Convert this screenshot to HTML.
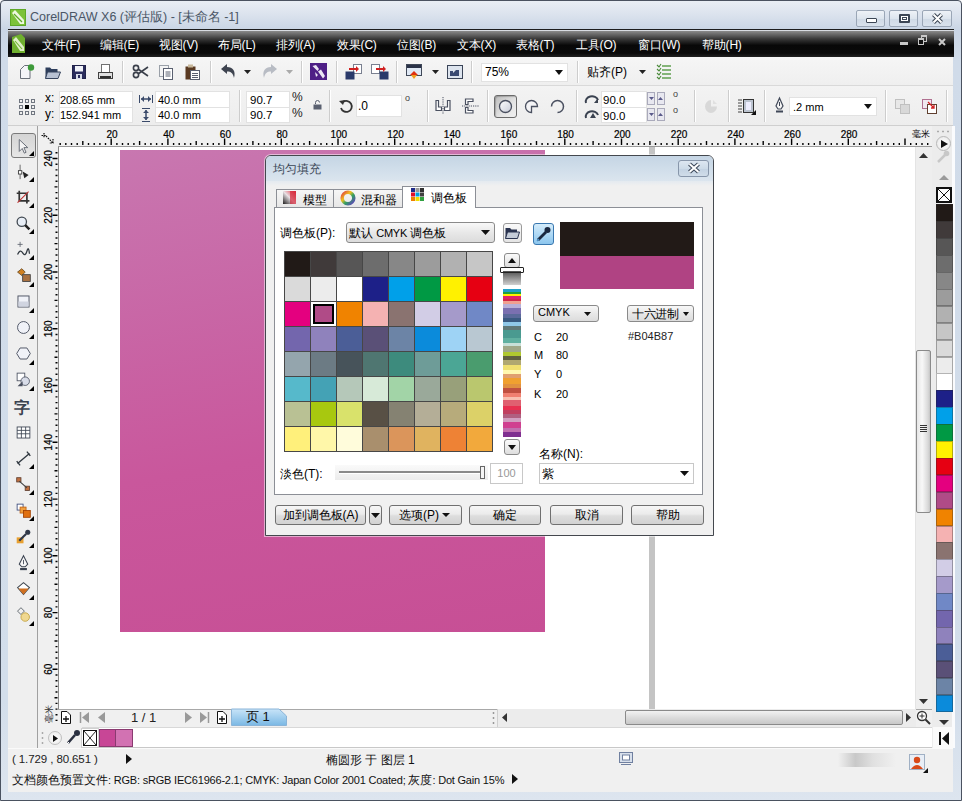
<!DOCTYPE html>
<html><head><meta charset="utf-8">
<style>
*{margin:0;padding:0;box-sizing:border-box}
html,body{width:962px;height:801px;overflow:hidden;background:#fff}
body{font-family:"Liberation Sans",sans-serif;font-size:12px;color:#000;position:relative}
.a{position:absolute}
svg{position:absolute;overflow:visible}
#frame{left:0;top:0;width:962px;height:801px;background:linear-gradient(#e9eef4,#dde4ee 12px,#c9d5e5 29px,#d0dbe9 60px,#d3deeb 700px,#dde5ef);border:1px solid #4a5260;border-radius:4px 4px 0 0}
#title{left:30px;top:9px;font-size:12.5px;color:#4a5666;white-space:nowrap}
.wb{top:10px;height:17px;border:1px solid #9aa6b6;border-radius:2px;background:linear-gradient(#eef2f7,#dde5ee 50%,#cfd9e5 51%,#d9e2ec)}
#menubar{left:8px;top:31px;width:946px;height:26px;background:linear-gradient(#8a8a8a,#3a3a3a 30%,#080808 55%,#0a0a0a 85%,#202020)}
.menu{top:37px;font-size:12px;letter-spacing:-0.2px;color:#fff;white-space:nowrap}
#tb1{left:8px;top:57px;width:945px;height:29px;background:linear-gradient(#f6f6f6,#efefef);border-bottom:1px solid #d9d9d9}
#tb2{left:8px;top:86px;width:945px;height:40px;background:linear-gradient(#f3f3f3,#ededed);border-bottom:1px solid #cfcfcf}
.sep{width:1px;background:#cdcdcd;border-right:1px solid #fff;width:2px}
.inp{background:#fff;border:1px solid #e2e2e2;font-size:12.5px;white-space:nowrap;padding-left:3px;line-height:15px}
.lbl{font-size:12.5px;white-space:nowrap}
#toolbox{left:8px;top:126px;width:30px;height:622px;background:#efefef;border-right:1px solid #d8d8d8}
#hruler{left:38px;top:126px;width:894px;height:21px;background:#f0f0f0}
#vruler{left:38px;top:147px;width:20px;height:580px;background:#f0f0f0}
#canvas{left:58px;top:147px;width:858px;height:562px;background:#fff}
#rect{left:120px;top:150px;width:425px;height:482px;background:linear-gradient(170deg,#c877b0,#c9579c 60%,#c74f95)}
#vscroll{left:916px;top:147px;width:16px;height:562px;background:#eeeeee}
#palette{left:932px;top:126px;width:21px;height:622px;background:#ececec}
#navbar{left:58px;top:709px;width:874px;height:18px;background:#f0f0f0;border-top:1px solid #a8a8a8}
#docpal{left:38px;top:727px;width:894px;height:21px;background:#fff;border-top:1px solid #d8d8d8;border-bottom:1px solid #c8c8c8}
#status{left:8px;top:748px;width:945px;height:44px;background:#f0f0f0}
</style></head><body>
<div id="frame" class="a"></div>
<!-- title bar -->
<svg style="left:10px;top:9px" width="16" height="17" viewBox="0 0 16 17"><rect x="0" y="0" width="16" height="17" fill="#5ea828"/><rect x="1" y="1" width="14" height="15" fill="#7cc23a"/><path d="M2 4 L5 1 L14 11 L14 15 L10 15 Z" fill="#eef8e0"/><path d="M4 5 L12 13" stroke="#5ea828" stroke-width="1.2"/></svg>
<div id="title" class="a">CorelDRAW X6 (评估版) - [未命名 -1]</div>
<div class="a wb" style="left:856px;width:29px"><div class="a" style="left:9px;top:7px;width:11px;height:5px;border:1.5px solid #3c4654;border-radius:1px;background:#fff"></div></div>
<div class="a wb" style="left:889px;width:29px"><div class="a" style="left:9px;top:3px;width:11px;height:9px;border:2px solid #3c4654;border-radius:1px;background:#fff"></div><div class="a" style="left:12px;top:6px;width:5px;height:3px;border:1px solid #3c4654"></div></div>
<div class="a wb" style="left:922px;width:30px"><svg style="left:8px;top:2px" width="13" height="11" viewBox="0 0 13 11"><path d="M2.5 1.5 L10.5 9.5 M10.5 1.5 L2.5 9.5" stroke="#3c4654" stroke-width="4"/><path d="M2.5 1.5 L10.5 9.5 M10.5 1.5 L2.5 9.5" stroke="#fff" stroke-width="2"/></svg></div>
<!-- menu bar -->
<div class="a" style="left:8px;top:29px;width:946px;height:2px;background:linear-gradient(#1e1e1e 50%,#d8dce2 50%)"></div>
<div id="menubar" class="a"></div>
<svg style="left:12px;top:34px" width="13" height="19" viewBox="0 0 13 19"><path d="M0 3 L9 0 L13 4 L13 19 L0 19Z" fill="#6fb02e"/><path d="M1 6 L4 3 L12 13 L12 17 L8 17Z" fill="#dff0c8"/><path d="M3 7 L10 15" stroke="#6fb02e" stroke-width="1.1"/></svg>
<div class="a menu" style="left:42px">文件(F)</div>
<div class="a menu" style="left:100px">编辑(E)</div>
<div class="a menu" style="left:159px">视图(V)</div>
<div class="a menu" style="left:218px">布局(L)</div>
<div class="a menu" style="left:276px">排列(A)</div>
<div class="a menu" style="left:337px">效果(C)</div>
<div class="a menu" style="left:397px">位图(B)</div>
<div class="a menu" style="left:457px">文本(X)</div>
<div class="a menu" style="left:516px">表格(T)</div>
<div class="a menu" style="left:576px">工具(O)</div>
<div class="a menu" style="left:638px">窗口(W)</div>
<div class="a menu" style="left:702px">帮助(H)</div>
<div class="a" style="left:900px;top:42px;width:8px;height:3px;background:#c8c8c8"></div>
<div class="a" style="left:921px;top:35px;width:6px;height:7px;border:1px solid #c8c8c8;border-top-width:2px"></div><div class="a" style="left:918px;top:38px;width:6px;height:7px;border:1px solid #c8c8c8;border-top-width:2px;background:#111"></div>
<svg style="left:938px;top:38px" width="8" height="8" viewBox="0 0 8 8"><path d="M1 1L7 7M7 1L1 7" stroke="#c8c8c8" stroke-width="2"/></svg>
<!-- toolbar 1 -->
<div id="tb1" class="a"></div>
<svg style="left:19px;top:64px" width="16" height="16" viewBox="0 0 16 16"><path d="M1.5 5.5 L5.5 1.5 L11 1.5 L11 14.5 L1.5 14.5Z" fill="#f4f4f8" stroke="#6a6f7a"/><circle cx="12" cy="3.5" r="3.2" fill="#3e9a3a"/></svg>
<svg style="left:45px;top:65px" width="16" height="15" viewBox="0 0 16 15"><path d="M0.5 2.5 L5 2.5 L6.5 4 L12.5 4 L12.5 13.5 L0.5 13.5Z" fill="#2e3e5c"/><path d="M2.5 7 L15.5 7 L13 13.5 L0.5 13.5Z" fill="#b8c2d4" stroke="#36445e"/></svg>
<svg style="left:72px;top:65px" width="14" height="14" viewBox="0 0 14 14"><rect x=".5" y=".5" width="13" height="13" fill="#2a2c5c" stroke="#20224a"/><rect x="3" y="1" width="8" height="5.5" fill="#f0f2f8"/><rect x="4" y="9" width="6" height="5" fill="#d8dce8"/><rect x="6" y="10" width="2" height="3" fill="#2a2c5c"/></svg>
<svg style="left:98px;top:64px" width="15" height="16" viewBox="0 0 15 16"><rect x="3.5" y=".5" width="8" height="8" fill="#fff" stroke="#707070"/><rect x=".5" y="8.5" width="14" height="6" fill="#e0e0e0" stroke="#404040"/><rect x="2" y="12" width="11" height="2" fill="#303030"/></svg>
<div class="a sep" style="left:122px;top:61px;height:22px"></div>
<svg style="left:132px;top:64px" width="17" height="15" viewBox="0 0 17 15"><circle cx="4" cy="4" r="2.6" fill="none" stroke="#3a3f4a" stroke-width="1.6"/><circle cx="4" cy="11" r="2.6" fill="none" stroke="#3a3f4a" stroke-width="1.6"/><path d="M6 5 L16 12 M6 10 L16 3" stroke="#3a3f4a" stroke-width="1.6"/></svg>
<svg style="left:159px;top:65px" width="15" height="15" viewBox="0 0 15 15"><rect x=".5" y=".5" width="9" height="11" fill="#f4f4f4" stroke="#9aa0a8"/><rect x="4.5" y="3.5" width="9" height="11" fill="#fff" stroke="#5a6070"/><path d="M6.5 7h5M6.5 9h5M6.5 11h5" stroke="#5a6070"/></svg>
<svg style="left:185px;top:64px" width="15" height="16" viewBox="0 0 15 16"><rect x=".5" y="2.5" width="10" height="13" fill="#5a3a22"/><rect x="3" y=".5" width="5" height="3" fill="#c8b89a"/><rect x="5.5" y="6.5" width="9" height="9" fill="#fff" stroke="#5a6070"/><path d="M7 9.5h6M7 11.5h6M7 13.5h6" stroke="#5a6070"/></svg>
<div class="a sep" style="left:210px;top:61px;height:22px"></div>
<svg style="left:220px;top:63px" width="17" height="17" viewBox="0 0 17 17"><path d="M1 6 L7 1 L7 4 C13 4 16 8 14 15 C13 10 11 8.5 7 8.5 L7 11Z" fill="#3e4450"/></svg>
<svg style="left:244px;top:70px" width="7" height="4"><path d="M0 0h7L3.5 4Z" fill="#222"/></svg>
<svg style="left:261px;top:63px" width="17" height="17" viewBox="0 0 17 17"><path d="M16 6 L10 1 L10 4 C4 4 1 8 3 15 C4 10 6 8.5 10 8.5 L10 11Z" fill="#b8bcc4"/></svg>
<svg style="left:286px;top:70px" width="7" height="4"><path d="M0 0h7L3.5 4Z" fill="#aaa"/></svg>
<div class="a sep" style="left:301px;top:61px;height:22px"></div>
<svg style="left:310px;top:63px" width="17" height="17" viewBox="0 0 17 17"><rect width="17" height="17" fill="#4e1f86"/><path d="M2.5 3 L6 2 L9 6 L7.5 8 Z M8 8.5 L11 6.5 L15 13 L13 15.5 Z M5 9 L8 12 L6 14Z" fill="#ece6f4"/></svg>
<div class="a sep" style="left:336px;top:61px;height:22px"></div>
<svg style="left:345px;top:64px" width="18" height="16" viewBox="0 0 18 16"><rect x="8.5" y=".5" width="8" height="9" fill="#fff" stroke="#7a8090"/><rect x=".5" y="7.5" width="9" height="8" fill="#2a3a6a"/><path d="M4 5 L12 5" stroke="#d02020" stroke-width="2"/><path d="M11 2 L14 5 L11 8Z" fill="#d02020"/></svg>
<svg style="left:371px;top:64px" width="18" height="16" viewBox="0 0 18 16"><rect x=".5" y=".5" width="8" height="9" fill="#fff" stroke="#7a8090"/><rect x="8.5" y="7.5" width="9" height="8" fill="#2a3a6a"/><path d="M5 5 L13 5" stroke="#d02020" stroke-width="2"/><path d="M12 2 L15 5 L12 8Z" fill="#d02020"/></svg>
<div class="a sep" style="left:396px;top:61px;height:22px"></div>
<svg style="left:406px;top:64px" width="16" height="16" viewBox="0 0 16 16"><rect x=".5" y=".5" width="15" height="11" fill="#dfe8f4" stroke="#404858"/><rect x="1" y="1" width="14" height="3" fill="#2a3248"/><path d="M4 11 L12 11 L8 7Z" fill="#e03010"/><path d="M5 11 L11 11 L8 15Z" fill="#f0a020"/></svg>
<svg style="left:432px;top:70px" width="7" height="4"><path d="M0 0h7L3.5 4Z" fill="#222"/></svg>
<svg style="left:447px;top:65px" width="16" height="14" viewBox="0 0 16 14"><rect x=".5" y=".5" width="15" height="13" fill="#dde4ee" stroke="#3a4458"/><path d="M3 11 L3 6 L6 6 L6 8 L9 5 L12 5 L12 11Z" fill="#3a4a72"/></svg>
<div class="a sep" style="left:471px;top:61px;height:22px"></div>
<div class="a inp" style="left:481px;top:63px;width:87px;height:19px;line-height:17px;font-size:12px;padding-left:3px">75%</div>
<svg style="left:555px;top:70px" width="8" height="5"><path d="M0 0h8L4 5Z" fill="#111"/></svg>
<div class="a sep" style="left:577px;top:61px;height:22px"></div>
<div class="a lbl" style="left:587px;top:64px;font-size:12px">贴齐(P)</div>
<svg style="left:639px;top:70px" width="7" height="4"><path d="M0 0h7L3.5 4Z" fill="#222"/></svg>
<svg style="left:657px;top:64px" width="14" height="16" viewBox="0 0 14 16"><path d="M5 2h9M5 6h9M5 10h9M5 14h9" stroke="#60a050" stroke-width="1.3"/><path d="M0 1l2 2 2-3M0 5l2 2 2-3M0 9l2 2 2-3M0 13l2 2 2-3" stroke="#4a8a3a" fill="none" stroke-width="1.1"/></svg>
<!-- property bar -->
<div id="tb2" class="a"></div>
<svg style="left:19px;top:99px" width="16" height="16" viewBox="0 0 16 16"><g fill="none" stroke="#707680"><rect x=".5" y=".5" width="3" height="3"/><rect x="6.5" y=".5" width="3" height="3"/><rect x="12.5" y=".5" width="3" height="3"/><rect x=".5" y="6.5" width="3" height="3"/><rect x="12.5" y="6.5" width="3" height="3"/><rect x=".5" y="12.5" width="3" height="3"/><rect x="6.5" y="12.5" width="3" height="3"/><rect x="12.5" y="12.5" width="3" height="3"/></g><rect x="6" y="6" width="4" height="4" fill="#000"/></svg>
<div class="a lbl" style="left:45px;top:91px;font-size:12px">x:</div>
<div class="a lbl" style="left:45px;top:107px;font-size:12px">y:</div>
<div class="a inp" style="left:59px;top:91px;width:74px;height:16px;border-bottom:none;font-size:11px;padding-left:0;line-height:16px">208.65 mm</div>
<div class="a inp" style="left:59px;top:107px;width:74px;height:16px;font-size:11px;padding-left:0;line-height:15px">152.941 mm</div>
<svg style="left:139px;top:95px" width="14" height="8" viewBox="0 0 14 8"><path d="M0.5 0v8M13.5 0v8" stroke="#3a4a6a"/><path d="M2 4h10" stroke="#3a4a6a" stroke-width="1.5"/><path d="M2 4l3-3v6zM12 4l-3-3v6z" fill="#3a4a6a"/></svg>
<svg style="left:141px;top:108px" width="10" height="14" viewBox="0 0 10 14"><path d="M1 .5h8M1 13.5h8" stroke="#3a4a6a"/><path d="M5 2v10" stroke="#3a4a6a" stroke-width="1.5"/><path d="M5 2l-3 3h6zM5 12l-3-3h6z" fill="#3a4a6a"/></svg>
<div class="a inp" style="left:155px;top:91px;width:75px;height:16px;border-bottom:none;font-size:11px;padding-left:2px;line-height:16px">40.0 mm</div>
<div class="a inp" style="left:155px;top:107px;width:75px;height:16px;font-size:11px;padding-left:2px;line-height:15px">40.0 mm</div>
<div class="a sep" style="left:239px;top:90px;height:32px"></div>
<div class="a inp" style="left:246px;top:91px;width:44px;height:16px;border-bottom:none;font-size:11.5px;line-height:16px">90.7</div>
<div class="a inp" style="left:246px;top:107px;width:44px;height:16px;font-size:11.5px">90.7</div>
<div class="a lbl" style="left:292px;top:90px;font-size:12px;color:#222">%</div>
<div class="a lbl" style="left:292px;top:106px;font-size:12px;color:#222">%</div>
<svg style="left:313px;top:100px" width="9" height="10" viewBox="0 0 9 10"><path d="M2.5 4V2.5a2 2 0 0 1 4 0" fill="none" stroke="#5a6070"/><rect x=".5" y="4.5" width="8" height="5" fill="#5a6070"/></svg>
<div class="a sep" style="left:329px;top:90px;height:32px"></div>
<svg style="left:339px;top:99px" width="14" height="14" viewBox="0 0 14 14"><path d="M4 3 A5.5 5.5 0 1 1 2 9" fill="none" stroke="#333" stroke-width="1.8"/><path d="M0 2 L6 1 L4 6Z" fill="#333"/></svg>
<div class="a inp" style="left:356px;top:95px;width:46px;height:22px;line-height:20px;font-size:12px;padding-left:1px">.0</div>
<div class="a lbl" style="left:405px;top:93px;font-size:9px;color:#444">o</div>
<div class="a sep" style="left:427px;top:90px;height:32px"></div>
<svg style="left:435px;top:97px" width="16" height="17" viewBox="0 0 16 17"><path d="M1 3.5H3.5V10H6.5V13.5H1Z M15 3.5H12.5V10H9.5V13.5H15Z" fill="#fff" stroke="#4a5060" stroke-width="1.2"/><path d="M8 0V17" stroke="#4a5060" stroke-dasharray="1.2 1"/></svg>
<svg style="left:462px;top:98px" width="17" height="16" viewBox="0 0 17 16"><path d="M3.5 1H11V3.5H6V6.5H3.5Z M3.5 15H11V12.5H6V9.5H3.5Z" fill="#fff" stroke="#4a5060" stroke-width="1.2"/><path d="M0 8H17" stroke="#4a5060" stroke-dasharray="1.2 1"/></svg>
<div class="a sep" style="left:487px;top:90px;height:32px"></div>
<div class="a" style="left:494px;top:95px;width:23px;height:23px;border:1px solid #6a6a6a;border-radius:3px;background:linear-gradient(135deg,#bcbcbc,#e4e4e4 60%,#f0f0f0);box-shadow:inset 1px 1px 1px rgba(0,0,0,.2)"></div>
<svg style="left:498px;top:99px" width="15" height="15" viewBox="0 0 15 15"><defs><linearGradient id="eg" x1="0" y1="0" x2="1" y2="1"><stop offset="0" stop-color="#fff"/><stop offset="1" stop-color="#c8ccd8"/></linearGradient></defs><circle cx="7.5" cy="7.5" r="6" fill="url(#eg)" stroke="#4a5060" stroke-width="1.3"/></svg>
<svg style="left:524px;top:99px" width="15" height="15" viewBox="0 0 15 15"><path d="M7.5 7.5 V13.5 A6 6 0 1 1 13.5 7.5Z" fill="#f4f4f6" stroke="#4a5060" stroke-width="1.3"/></svg>
<svg style="left:550px;top:99px" width="15" height="15" viewBox="0 0 15 15"><path d="M7.5 13.5 A6 6 0 1 1 13.5 7.5" fill="none" stroke="#4a5060" stroke-width="1.5" transform="rotate(90 7.5 7.5)"/></svg>
<div class="a sep" style="left:576px;top:90px;height:32px"></div>
<svg style="left:585px;top:94px" width="14" height="10" viewBox="0 0 14 10"><path d="M1 9 A6 5 0 0 1 13 6" fill="none" stroke="#3a4250" stroke-width="2"/><path d="M9 9 L13 4 L13 9Z" fill="#3a4250"/></svg>
<svg style="left:585px;top:109px" width="14" height="10" viewBox="0 0 14 10"><path d="M1 9 A6 5 0 0 1 13 6" fill="none" stroke="#3a4250" stroke-width="2"/><path d="M5 9 L8 4 L11 9Z" fill="#3a4250"/></svg>
<div class="a inp" style="left:601px;top:91px;width:46px;height:16px;border-bottom:none;font-size:11.5px;padding-left:1px;line-height:17px">90.0</div>
<div class="a inp" style="left:601px;top:107px;width:46px;height:16px;font-size:11.5px;padding-left:1px;line-height:16px">90.0</div>
<div class="a" style="left:647px;top:92px;width:8px;height:13px;border:1px solid #aab;background:#e8e8f0"></div>
<div class="a" style="left:657px;top:92px;width:8px;height:13px;border:1px solid #aab;background:#e8e8f0"></div>
<div class="a" style="left:647px;top:108px;width:8px;height:13px;border:1px solid #aab;background:#e8e8f0"></div>
<div class="a" style="left:657px;top:108px;width:8px;height:13px;border:1px solid #aab;background:#e8e8f0"></div>
<svg style="left:648px;top:97px" width="17" height="20"><path d="M1 0h5L3.5 3zM10 3h5L12.5 0zM1 16h5L3.5 19zM10 19h5L12.5 16z" fill="#5a5a8a"/></svg>
<div class="a lbl" style="left:673px;top:89px;font-size:9px;color:#444">o</div>
<div class="a lbl" style="left:673px;top:105px;font-size:9px;color:#444">o</div>
<div class="a sep" style="left:694px;top:90px;height:32px"></div>
<svg style="left:704px;top:99px" width="14" height="15" viewBox="0 0 14 15"><path d="M7 7.5 L13 7.5 A6 6.5 0 1 1 7 1Z" fill="#d8d8d8"/><path d="M9 1 L13 5 L9 5Z" fill="#e0e0e0"/></svg>
<div class="a sep" style="left:728px;top:90px;height:32px"></div>
<svg style="left:738px;top:98px" width="18" height="18" viewBox="0 0 18 18"><path d="M0 2h4M0 5h4M0 8h4M0 11h4M0 14h4" stroke="#444"/><rect x="5.5" y="1.5" width="10" height="13" fill="#bcc4d0" stroke="#333"/><rect x="8" y="4" width="5" height="8" fill="#eef"/><path d="M13 17L18 12L18 17Z" fill="#111"/></svg>
<div class="a sep" style="left:764px;top:90px;height:32px"></div>
<svg style="left:775px;top:97px" width="9" height="16" viewBox="0 0 9 16"><path d="M4.5 1 L8 9 L6 12 L3 12 L1 9Z" fill="#f4f4f4" stroke="#404858" stroke-width="1.2"/><path d="M4.5 5v4" stroke="#404858"/><rect x="1" y="13.5" width="7" height="2" fill="#404858"/></svg>
<div class="a inp" style="left:789px;top:97px;width:88px;height:19px;line-height:19px;font-size:11px">.2 mm</div>
<svg style="left:864px;top:104px" width="8" height="5"><path d="M0 0h8L4 5Z" fill="#111"/></svg>
<div class="a sep" style="left:885px;top:90px;height:32px"></div>
<svg style="left:895px;top:99px" width="16" height="15" viewBox="0 0 16 15"><rect x=".5" y=".5" width="9" height="9" fill="#e8e8e8" stroke="#c0c0c0"/><rect x="5.5" y="5.5" width="9" height="9" fill="#d8d8d8" stroke="#c0c0c0"/></svg>
<svg style="left:922px;top:99px" width="16" height="16" viewBox="0 0 16 16"><rect x=".5" y=".5" width="9" height="9" fill="#f0e8f0" stroke="#b07090"/><rect x="5.5" y="5.5" width="9" height="9" fill="#fff" stroke="#604030"/><path d="M6 3 L12 9 M9 9h3V6" stroke="#d02020" stroke-width="1.3" fill="none"/></svg>
<div class="a sep" style="left:946px;top:90px;height:32px"></div>
<!-- workspace -->
<div id="toolbox" class="a"></div>
<div class="a" style="left:11px;top:133px;width:25px;height:25px;border:1px solid #7a7a7a;border-radius:3px;background:linear-gradient(#d4d4d4,#e6e6e6)"></div>
<svg style="left:14.5px;top:136.5px" width="17" height="17" viewBox="0 0 20 20"><path d="M5 3 L5 17 L8.5 13.5 L11 19 L13 18 L10.5 12.5 L15 12.5Z" fill="#f4f4f4" stroke="#606670" stroke-width="1.1"/></svg>
<svg style="left:28.5px;top:151.0px" width="5" height="5"><path d="M5 0V5H0Z" fill="#000"/></svg>
<svg style="left:14.5px;top:162.6px" width="17" height="17" viewBox="0 0 20 20"><path d="M6 2 L6 9" stroke="#555" /><rect x="4" y="9" width="4" height="4" fill="#fff" stroke="#333"/><path d="M9 10 L16 14 L11 18Z" fill="#222"/><path d="M6 13 L6 19" stroke="#555"/></svg>
<svg style="left:28.5px;top:177.1px" width="5" height="5"><path d="M5 0V5H0Z" fill="#000"/></svg>
<svg style="left:14.5px;top:188.7px" width="17" height="17" viewBox="0 0 20 20"><path d="M5 2V14H17M2 5H14V17" fill="none" stroke="#333" stroke-width="2"/><path d="M3 16 L16 3" stroke="#c03030" stroke-width="1.2"/></svg>
<svg style="left:28.5px;top:203.2px" width="5" height="5"><path d="M5 0V5H0Z" fill="#000"/></svg>
<svg style="left:14.5px;top:214.8px" width="17" height="17" viewBox="0 0 20 20"><circle cx="8" cy="8" r="5.5" fill="#e8eef6" stroke="#404850" stroke-width="1.5"/><path d="M12 12 L17 17" stroke="#202020" stroke-width="3"/></svg>
<svg style="left:28.5px;top:229.3px" width="5" height="5"><path d="M5 0V5H0Z" fill="#000"/></svg>
<svg style="left:14.5px;top:240.9px" width="17" height="17" viewBox="0 0 20 20"><path d="M3 4 H9 M6 1 V7" stroke="#606670"/><path d="M3 16 Q6 9 9 14 T14 12 T17 15" fill="none" stroke="#303840" stroke-width="1.5"/></svg>
<svg style="left:28.5px;top:255.4px" width="5" height="5"><path d="M5 0V5H0Z" fill="#000"/></svg>
<svg style="left:14.5px;top:267.0px" width="17" height="17" viewBox="0 0 20 20"><path d="M3 6 L8 2 L12 6 L8 10Z" fill="#d08020" stroke="#6a4a20"/><rect x="9" y="9" width="9" height="8" fill="#a87040" stroke="#404040"/></svg>
<svg style="left:28.5px;top:281.5px" width="5" height="5"><path d="M5 0V5H0Z" fill="#000"/></svg>
<svg style="left:14.5px;top:293.1px" width="17" height="17" viewBox="0 0 20 20"><rect x="3.5" y="3.5" width="13" height="13" fill="#f0f2f8" stroke="#4a5060" stroke-width="1.1"/><rect x="4" y="10" width="12" height="6" fill="#d0d4e0"/></svg>
<svg style="left:28.5px;top:307.6px" width="5" height="5"><path d="M5 0V5H0Z" fill="#000"/></svg>
<svg style="left:14.5px;top:319.2px" width="17" height="17" viewBox="0 0 20 20"><circle cx="10" cy="10" r="7" fill="#f0f2f8" stroke="#4a5060" stroke-width="1.1"/></svg>
<svg style="left:28.5px;top:333.7px" width="5" height="5"><path d="M5 0V5H0Z" fill="#000"/></svg>
<svg style="left:14.5px;top:345.3px" width="17" height="17" viewBox="0 0 20 20"><path d="M6 3.5 H14 L18 10 L14 16.5 H6 L2 10Z" fill="#f0f2f8" stroke="#4a5060" stroke-width="1.1"/></svg>
<svg style="left:28.5px;top:359.8px" width="5" height="5"><path d="M5 0V5H0Z" fill="#000"/></svg>
<svg style="left:14.5px;top:371.4px" width="17" height="17" viewBox="0 0 20 20"><rect x="2.5" y="2.5" width="9" height="9" fill="#fff" stroke="#4a5060"/><circle cx="12" cy="12" r="5" fill="#d8dce8" stroke="#4a5060"/><path d="M3 18 L9 12 L9 18Z" fill="#4a5060"/></svg>
<svg style="left:28.5px;top:385.9px" width="5" height="5"><path d="M5 0V5H0Z" fill="#000"/></svg>
<svg style="left:13px;top:396.0px" width="20" height="20" viewBox="0 0 20 20"><text x="1" y="17" font-size="16" font-weight="bold" fill="#3a4250" font-family="Liberation Sans">字</text></svg>
<svg style="left:14.5px;top:423.6px" width="17" height="17" viewBox="0 0 20 20"><rect x="2.5" y="3.5" width="15" height="13" fill="#fff" stroke="#3a4250"/><path d="M2.5 7.5h15M2.5 11.5h15M7.5 3.5v13M12.5 3.5v13" stroke="#3a4250"/></svg>
<svg style="left:14.5px;top:449.7px" width="17" height="17" viewBox="0 0 20 20"><path d="M3 16 L17 4" stroke="#303840" stroke-width="1.6"/><path d="M2 13 L6 18 M14 2 L18 7" stroke="#303840" stroke-width="1.6"/></svg>
<svg style="left:28.5px;top:464.2px" width="5" height="5"><path d="M5 0V5H0Z" fill="#000"/></svg>
<svg style="left:14.5px;top:475.8px" width="17" height="17" viewBox="0 0 20 20"><rect x="2" y="2" width="5" height="5" fill="#c07040" stroke="#604030"/><rect x="12" y="12" width="5" height="5" fill="#c07040" stroke="#604030"/><path d="M5 6 L14 14" stroke="#404040" stroke-width="1.3"/></svg>
<svg style="left:28.5px;top:490.3px" width="5" height="5"><path d="M5 0V5H0Z" fill="#000"/></svg>
<svg style="left:14.5px;top:501.9px" width="17" height="17" viewBox="0 0 20 20"><rect x="2.5" y="2.5" width="7" height="7" fill="#fff" stroke="#3a4a7a"/><rect x="6" y="6" width="7" height="7" fill="#f0a040" stroke="#c06010"/><rect x="10" y="10" width="8" height="8" fill="#e07010" stroke="#a04000"/></svg>
<svg style="left:28.5px;top:516.4px" width="5" height="5"><path d="M5 0V5H0Z" fill="#000"/></svg>
<svg style="left:14.5px;top:528.0px" width="17" height="17" viewBox="0 0 20 20"><rect x="2" y="11" width="8" height="7" fill="#e8a030"/><path d="M5 15 L13 7" stroke="#303848" stroke-width="2.5"/><circle cx="15" cy="5" r="3" fill="#303848"/></svg>
<svg style="left:28.5px;top:542.5px" width="5" height="5"><path d="M5 0V5H0Z" fill="#000"/></svg>
<svg style="left:14.5px;top:554.1px" width="17" height="17" viewBox="0 0 20 20"><path d="M10 2 L15 12 L12 15 L8 15 L5 12Z" fill="#f8f8f8" stroke="#3a4250" stroke-width="1.2"/><path d="M10 7v5" stroke="#3a4250"/><rect x="6" y="16.5" width="8" height="2.5" fill="#3a4250"/></svg>
<svg style="left:28.5px;top:568.6px" width="5" height="5"><path d="M5 0V5H0Z" fill="#000"/></svg>
<svg style="left:14.5px;top:580.2px" width="17" height="17" viewBox="0 0 20 20"><path d="M3 9 L10 3 L17 9 L10 17Z" fill="#fff" stroke="#404850" stroke-width="1.2"/><path d="M4 10 L16 10 L10 17Z" fill="#d07020"/></svg>
<svg style="left:28.5px;top:594.7px" width="5" height="5"><path d="M5 0V5H0Z" fill="#000"/></svg>
<svg style="left:14.5px;top:606.3px" width="17" height="17" viewBox="0 0 20 20"><path d="M3 6 L7 2 L11 6 L7 10Z" fill="#f0f0f0" stroke="#505860"/><circle cx="12" cy="13" r="5" fill="#f0d890" stroke="#c0a040"/></svg>
<svg style="left:28.5px;top:620.8px" width="5" height="5"><path d="M5 0V5H0Z" fill="#000"/></svg>
<div id="hruler" class="a"></div>
<svg style="left:0;top:0" width="962" height="801">
<path d="M58 146.5H932" stroke="#9a9a9a"/>
<path d="M60.2 143V145 M65.8 143V145 M71.5 143V145 M77.2 143V145 M82.8 141V145 M88.5 143V145 M94.2 143V145 M99.9 143V145 M105.5 143V145 M111.2 138.5V145 M116.9 143V145 M122.5 143V145 M128.2 143V145 M133.9 143V145 M139.6 141V145 M145.2 143V145 M150.9 143V145 M156.6 143V145 M162.2 143V145 M167.9 138.5V145 M173.6 143V145 M179.2 143V145 M184.9 143V145 M190.6 143V145 M196.2 141V145 M201.9 143V145 M207.6 143V145 M213.3 143V145 M218.9 143V145 M224.6 138.5V145 M230.3 143V145 M235.9 143V145 M241.6 143V145 M247.3 143V145 M252.9 141V145 M258.6 143V145 M264.3 143V145 M270.0 143V145 M275.6 143V145 M281.3 138.5V145 M287.0 143V145 M292.6 143V145 M298.3 143V145 M304.0 143V145 M309.6 141V145 M315.3 143V145 M321.0 143V145 M326.7 143V145 M332.3 143V145 M338.0 138.5V145 M343.7 143V145 M349.3 143V145 M355.0 143V145 M360.7 143V145 M366.4 141V145 M372.0 143V145 M377.7 143V145 M383.4 143V145 M389.0 143V145 M394.7 138.5V145 M400.4 143V145 M406.0 143V145 M411.7 143V145 M417.4 143V145 M423.1 141V145 M428.7 143V145 M434.4 143V145 M440.1 143V145 M445.7 143V145 M451.4 138.5V145 M457.1 143V145 M462.7 143V145 M468.4 143V145 M474.1 143V145 M479.8 141V145 M485.4 143V145 M491.1 143V145 M496.8 143V145 M502.4 143V145 M508.1 138.5V145 M513.8 143V145 M519.4 143V145 M525.1 143V145 M530.8 143V145 M536.5 141V145 M542.1 143V145 M547.8 143V145 M553.5 143V145 M559.1 143V145 M564.8 138.5V145 M570.5 143V145 M576.1 143V145 M581.8 143V145 M587.5 143V145 M593.1 141V145 M598.8 143V145 M604.5 143V145 M610.2 143V145 M615.8 143V145 M621.5 138.5V145 M627.2 143V145 M632.8 143V145 M638.5 143V145 M644.2 143V145 M649.9 141V145 M655.5 143V145 M661.2 143V145 M666.9 143V145 M672.5 143V145 M678.2 138.5V145 M683.9 143V145 M689.5 143V145 M695.2 143V145 M700.9 143V145 M706.5 141V145 M712.2 143V145 M717.9 143V145 M723.6 143V145 M729.2 143V145 M734.9 138.5V145 M740.6 143V145 M746.2 143V145 M751.9 143V145 M757.6 143V145 M763.2 141V145 M768.9 143V145 M774.6 143V145 M780.3 143V145 M785.9 143V145 M791.6 138.5V145 M797.3 143V145 M802.9 143V145 M808.6 143V145 M814.3 143V145 M820.0 141V145 M825.6 143V145 M831.3 143V145 M837.0 143V145 M842.6 143V145 M848.3 138.5V145 M854.0 143V145 M859.6 143V145 M865.3 143V145 M871.0 143V145 M876.6 141V145 M882.3 143V145 M888.0 143V145 M893.7 143V145 M899.3 143V145 M905.0 138.5V145 M910.7 143V145 M916.3 143V145 M922.0 143V145 M927.7 143V145" stroke="#000" stroke-width="1.4"/>
<text x="112.0" y="137.5" font-size="10" text-anchor="middle" font-family="Liberation Sans" stroke="#000" stroke-width="0.2">20</text>
<text x="168.7" y="137.5" font-size="10" text-anchor="middle" font-family="Liberation Sans" stroke="#000" stroke-width="0.2">40</text>
<text x="225.4" y="137.5" font-size="10" text-anchor="middle" font-family="Liberation Sans" stroke="#000" stroke-width="0.2">60</text>
<text x="282.1" y="137.5" font-size="10" text-anchor="middle" font-family="Liberation Sans" stroke="#000" stroke-width="0.2">80</text>
<text x="338.8" y="137.5" font-size="10" text-anchor="middle" font-family="Liberation Sans" stroke="#000" stroke-width="0.2">100</text>
<text x="395.5" y="137.5" font-size="10" text-anchor="middle" font-family="Liberation Sans" stroke="#000" stroke-width="0.2">120</text>
<text x="452.2" y="137.5" font-size="10" text-anchor="middle" font-family="Liberation Sans" stroke="#000" stroke-width="0.2">140</text>
<text x="508.9" y="137.5" font-size="10" text-anchor="middle" font-family="Liberation Sans" stroke="#000" stroke-width="0.2">160</text>
<text x="565.6" y="137.5" font-size="10" text-anchor="middle" font-family="Liberation Sans" stroke="#000" stroke-width="0.2">180</text>
<text x="622.3" y="137.5" font-size="10" text-anchor="middle" font-family="Liberation Sans" stroke="#000" stroke-width="0.2">200</text>
<text x="679.0" y="137.5" font-size="10" text-anchor="middle" font-family="Liberation Sans" stroke="#000" stroke-width="0.2">220</text>
<text x="735.7" y="137.5" font-size="10" text-anchor="middle" font-family="Liberation Sans" stroke="#000" stroke-width="0.2">240</text>
<text x="792.4" y="137.5" font-size="10" text-anchor="middle" font-family="Liberation Sans" stroke="#000" stroke-width="0.2">260</text>
<text x="849.1" y="137.5" font-size="10" text-anchor="middle" font-family="Liberation Sans" stroke="#000" stroke-width="0.2">280</text>
</svg>
<div class="a" style="left:912px;top:128px;font-size:9px;letter-spacing:-0.5px">毫米</div>
<svg style="left:41px;top:133px" width="14" height="11" viewBox="0 0 14 11"><path d="M3 0v5M0.5 2.5h5M5 3L12 10M12 6V10H8" fill="none" stroke="#111" stroke-width="1.2" stroke-dasharray="1.6 1"/></svg>
<div id="vruler" class="a"></div>
<svg style="left:0;top:0" width="962" height="801">
<path d="M37.5 126V748" stroke="#a0a0a0"/>
<path d="M55.5 152.8H57.5 M52.5 158.5H57.5 M55.5 164.2H57.5 M55.5 169.9H57.5 M55.5 175.5H57.5 M55.5 181.2H57.5 M54.5 186.9H57.5 M55.5 192.6H57.5 M55.5 198.2H57.5 M55.5 203.9H57.5 M55.5 209.6H57.5 M52.5 215.3H57.5 M55.5 220.9H57.5 M55.5 226.6H57.5 M55.5 232.3H57.5 M55.5 238.0H57.5 M54.5 243.6H57.5 M55.5 249.3H57.5 M55.5 255.0H57.5 M55.5 260.7H57.5 M55.5 266.3H57.5 M52.5 272.0H57.5 M55.5 277.7H57.5 M55.5 283.4H57.5 M55.5 289.0H57.5 M55.5 294.7H57.5 M54.5 300.4H57.5 M55.5 306.1H57.5 M55.5 311.8H57.5 M55.5 317.4H57.5 M55.5 323.1H57.5 M52.5 328.8H57.5 M55.5 334.5H57.5 M55.5 340.1H57.5 M55.5 345.8H57.5 M55.5 351.5H57.5 M54.5 357.2H57.5 M55.5 362.8H57.5 M55.5 368.5H57.5 M55.5 374.2H57.5 M55.5 379.9H57.5 M52.5 385.5H57.5 M55.5 391.2H57.5 M55.5 396.9H57.5 M55.5 402.6H57.5 M55.5 408.2H57.5 M54.5 413.9H57.5 M55.5 419.6H57.5 M55.5 425.3H57.5 M55.5 430.9H57.5 M55.5 436.6H57.5 M52.5 442.3H57.5 M55.5 448.0H57.5 M55.5 453.7H57.5 M55.5 459.3H57.5 M55.5 465.0H57.5 M54.5 470.7H57.5 M55.5 476.4H57.5 M55.5 482.0H57.5 M55.5 487.7H57.5 M55.5 493.4H57.5 M52.5 499.1H57.5 M55.5 504.7H57.5 M55.5 510.4H57.5 M55.5 516.1H57.5 M55.5 521.8H57.5 M54.5 527.4H57.5 M55.5 533.1H57.5 M55.5 538.8H57.5 M55.5 544.5H57.5 M55.5 550.1H57.5 M52.5 555.8H57.5 M55.5 561.5H57.5 M55.5 567.2H57.5 M55.5 572.8H57.5 M55.5 578.5H57.5 M54.5 584.2H57.5 M55.5 589.9H57.5 M55.5 595.6H57.5 M55.5 601.2H57.5 M55.5 606.9H57.5 M52.5 612.6H57.5 M55.5 618.3H57.5 M55.5 623.9H57.5 M55.5 629.6H57.5 M55.5 635.3H57.5 M54.5 641.0H57.5 M55.5 646.6H57.5 M55.5 652.3H57.5 M55.5 658.0H57.5 M55.5 663.7H57.5 M52.5 669.3H57.5 M55.5 675.0H57.5 M55.5 680.7H57.5 M55.5 686.4H57.5 M55.5 692.0H57.5 M54.5 697.7H57.5 M55.5 703.4H57.5 M55.5 709.1H57.5 M55.5 714.7H57.5 M55.5 720.4H57.5" stroke="#000" stroke-width="1.4"/>
<text transform="translate(51.5 158.5) rotate(-90)" font-size="10" text-anchor="middle" font-family="Liberation Sans" stroke="#000" stroke-width="0.2">240</text>
<text transform="translate(51.5 215.3) rotate(-90)" font-size="10" text-anchor="middle" font-family="Liberation Sans" stroke="#000" stroke-width="0.2">220</text>
<text transform="translate(51.5 272.0) rotate(-90)" font-size="10" text-anchor="middle" font-family="Liberation Sans" stroke="#000" stroke-width="0.2">200</text>
<text transform="translate(51.5 328.8) rotate(-90)" font-size="10" text-anchor="middle" font-family="Liberation Sans" stroke="#000" stroke-width="0.2">180</text>
<text transform="translate(51.5 385.5) rotate(-90)" font-size="10" text-anchor="middle" font-family="Liberation Sans" stroke="#000" stroke-width="0.2">160</text>
<text transform="translate(51.5 442.3) rotate(-90)" font-size="10" text-anchor="middle" font-family="Liberation Sans" stroke="#000" stroke-width="0.2">140</text>
<text transform="translate(51.5 499.1) rotate(-90)" font-size="10" text-anchor="middle" font-family="Liberation Sans" stroke="#000" stroke-width="0.2">120</text>
<text transform="translate(51.5 555.8) rotate(-90)" font-size="10" text-anchor="middle" font-family="Liberation Sans" stroke="#000" stroke-width="0.2">100</text>
<text transform="translate(51.5 612.6) rotate(-90)" font-size="10" text-anchor="middle" font-family="Liberation Sans" stroke="#000" stroke-width="0.2">80</text>
<text transform="translate(51.5 669.3) rotate(-90)" font-size="10" text-anchor="middle" font-family="Liberation Sans" stroke="#000" stroke-width="0.2">60</text>
<text transform="translate(51.5 714) rotate(-90)" font-size="8.5" text-anchor="middle" font-family="Liberation Sans" fill="#333">毫米</text>
</svg>
<div id="canvas" class="a"></div>
<div class="a" style="left:58px;top:147px;width:1px;height:580px;background:#8a8a8a"></div>
<div id="rect" class="a"></div>
<div id="vscroll" class="a"></div>
<div class="a" style="left:915px;top:147px;width:1px;height:562px;background:#e4e4e4"></div>
<svg style="left:919px;top:153px" width="9" height="5"><path d="M0 5L4.5 0L9 5Z" fill="#333"/></svg>
<div class="a" style="left:916px;top:350px;width:15px;height:163px;border:1px solid #8a8a8a;border-radius:2px;background:linear-gradient(90deg,#e6e6e6,#f8f8f8 40%,#d8d8d8 85%,#c4c4c4)"></div>
<svg style="left:920px;top:425px" width="7" height="8"><path d="M0 .5H7M0 2.5H7M0 4.5H7M0 6.5H7" stroke="#333"/></svg>
<svg style="left:919px;top:699px" width="9" height="5"><path d="M0 0L4.5 5L9 0Z" fill="#333"/></svg>
<div id="palette" class="a"></div>
<div class="a" style="left:952px;top:126px;width:3px;height:622px;background:#fafbfd"></div>
<svg style="left:936px;top:130px" width="14" height="3"><path d="M1 1.5h2M6 1.5h2M11 1.5h2" stroke="#aaa" stroke-width="1.5"/></svg>
<div class="a" style="left:936px;top:136px;width:15px;height:15px;border:1px solid #b8b8b8;border-radius:50%;background:radial-gradient(#fff,#e4e4e4)"></div>
<svg style="left:941px;top:140px" width="7" height="8"><path d="M0 0L7 4L0 8Z" fill="#111"/></svg>
<svg style="left:936px;top:150px" width="14" height="14" viewBox="0 0 14 14"><path d="M2 12L9 5" stroke="#c8c8c8" stroke-width="2.5"/><circle cx="10.5" cy="3.5" r="2.8" fill="#c8c8c8"/></svg>
<svg style="left:939px;top:175px" width="10" height="5"><path d="M0 5L5 0L10 5Z" fill="#9a9a9a"/></svg>
<div class="a" style="left:936px;top:187px;width:16px;height:16px;background:#fff;border:2px solid #111"></div>
<svg style="left:938px;top:189px" width="12" height="12"><path d="M0 0L12 12M12 0L0 12" stroke="#111" stroke-width="1"/></svg>
<div class="a" style="left:935.5px;top:204.40px;width:17px;height:17.50px;background:#211a17;border:1px solid rgba(40,40,40,.35)"></div>
<div class="a" style="left:935.5px;top:221.30px;width:17px;height:17.50px;background:#403a3a;border:1px solid rgba(40,40,40,.35)"></div>
<div class="a" style="left:935.5px;top:238.20px;width:17px;height:17.50px;background:#575656;border:1px solid rgba(40,40,40,.35)"></div>
<div class="a" style="left:935.5px;top:255.10px;width:17px;height:17.50px;background:#6d6d6d;border:1px solid rgba(40,40,40,.35)"></div>
<div class="a" style="left:935.5px;top:272.00px;width:17px;height:17.50px;background:#878787;border:1px solid rgba(40,40,40,.35)"></div>
<div class="a" style="left:935.5px;top:288.90px;width:17px;height:17.50px;background:#9c9c9c;border:1px solid rgba(40,40,40,.35)"></div>
<div class="a" style="left:935.5px;top:305.80px;width:17px;height:17.50px;background:#b1b1b1;border:1px solid rgba(40,40,40,.35)"></div>
<div class="a" style="left:935.5px;top:322.70px;width:17px;height:17.50px;background:#c6c6c6;border:1px solid rgba(40,40,40,.35)"></div>
<div class="a" style="left:935.5px;top:339.60px;width:17px;height:17.50px;background:#dadada;border:1px solid rgba(40,40,40,.35)"></div>
<div class="a" style="left:935.5px;top:356.50px;width:17px;height:17.50px;background:#ececec;border:1px solid rgba(40,40,40,.35)"></div>
<div class="a" style="left:935.5px;top:373.40px;width:17px;height:17.50px;background:#ffffff;border:1px solid rgba(40,40,40,.35)"></div>
<div class="a" style="left:935.5px;top:390.30px;width:17px;height:17.50px;background:#1d2088;border:1px solid rgba(40,40,40,.35)"></div>
<div class="a" style="left:935.5px;top:407.20px;width:17px;height:17.50px;background:#00a0e9;border:1px solid rgba(40,40,40,.35)"></div>
<div class="a" style="left:935.5px;top:424.10px;width:17px;height:17.50px;background:#009944;border:1px solid rgba(40,40,40,.35)"></div>
<div class="a" style="left:935.5px;top:441.00px;width:17px;height:17.50px;background:#fff100;border:1px solid rgba(40,40,40,.35)"></div>
<div class="a" style="left:935.5px;top:457.90px;width:17px;height:17.50px;background:#e60012;border:1px solid rgba(40,40,40,.35)"></div>
<div class="a" style="left:935.5px;top:474.80px;width:17px;height:17.50px;background:#e4007f;border:1px solid rgba(40,40,40,.35)"></div>
<div class="a" style="left:935.5px;top:491.70px;width:17px;height:17.50px;background:#b04b87;border:1px solid rgba(40,40,40,.35)"></div>
<div class="a" style="left:935.5px;top:508.60px;width:17px;height:17.50px;background:#f08300;border:1px solid rgba(40,40,40,.35)"></div>
<div class="a" style="left:935.5px;top:525.50px;width:17px;height:17.50px;background:#f5b2b2;border:1px solid rgba(40,40,40,.35)"></div>
<div class="a" style="left:935.5px;top:542.40px;width:17px;height:17.50px;background:#8a7370;border:1px solid rgba(40,40,40,.35)"></div>
<div class="a" style="left:935.5px;top:559.30px;width:17px;height:17.50px;background:#d2cde6;border:1px solid rgba(40,40,40,.35)"></div>
<div class="a" style="left:935.5px;top:576.20px;width:17px;height:17.50px;background:#a59aca;border:1px solid rgba(40,40,40,.35)"></div>
<div class="a" style="left:935.5px;top:593.10px;width:17px;height:17.50px;background:#7088c6;border:1px solid rgba(40,40,40,.35)"></div>
<div class="a" style="left:935.5px;top:610.00px;width:17px;height:17.50px;background:#7366ad;border:1px solid rgba(40,40,40,.35)"></div>
<div class="a" style="left:935.5px;top:626.90px;width:17px;height:17.50px;background:#8f82bc;border:1px solid rgba(40,40,40,.35)"></div>
<div class="a" style="left:935.5px;top:643.80px;width:17px;height:17.50px;background:#4b5e97;border:1px solid rgba(40,40,40,.35)"></div>
<div class="a" style="left:935.5px;top:660.70px;width:17px;height:17.50px;background:#5a5077;border:1px solid rgba(40,40,40,.35)"></div>
<div class="a" style="left:935.5px;top:677.60px;width:17px;height:17.50px;background:#6c84a6;border:1px solid rgba(40,40,40,.35)"></div>
<div class="a" style="left:935.5px;top:694.50px;width:17px;height:17.50px;background:#0b8bdb;border:1px solid rgba(40,40,40,.35)"></div>
<svg style="left:939px;top:720px" width="10" height="5"><path d="M0 0L5 5L10 0Z" fill="#333"/></svg>
<div class="a" style="left:933px;top:727px;width:20px;height:21px;background:#fafafa"></div><svg style="left:939px;top:732px" width="10" height="13"><path d="M1 0V13" stroke="#111" stroke-width="2"/><path d="M10 0V13L3 6.5Z" fill="#111"/></svg>
<div id="navbar" class="a"></div>
<svg style="left:61px;top:711px" width="10" height="13"><path d="M.5 .5H6L9.5 4V12.5H.5Z" fill="#fff" stroke="#111"/><path d="M5 5V11M2 8H8" stroke="#111" stroke-width="1.3"/></svg>
<svg style="left:80px;top:712px" width="9" height="11"><path d="M.5 0V11" stroke="#999" stroke-width="1.5"/><path d="M9 0V11L2 5.5Z" fill="#999"/></svg>
<svg style="left:98px;top:712px" width="7" height="11"><path d="M7 0V11L0 5.5Z" fill="#999"/></svg>
<div class="a" style="left:131px;top:709px;font-size:13px;line-height:17px;white-space:nowrap;color:#222">1 / 1</div>
<svg style="left:185px;top:712px" width="7" height="11"><path d="M0 0V11L7 5.5Z" fill="#999"/></svg>
<svg style="left:200px;top:712px" width="9" height="11"><path d="M0 0V11L7 5.5Z" fill="#999"/><path d="M8.5 0V11" stroke="#999" stroke-width="1.5"/></svg>
<svg style="left:217px;top:711px" width="10" height="13"><path d="M.5 .5H6L9.5 4V12.5H.5Z" fill="#fff" stroke="#111"/><path d="M5 5V11M2 8H8" stroke="#111" stroke-width="1.3"/></svg>
<svg style="left:231px;top:709px" width="56" height="17"><path d="M.5 0V16.5H55.5V7L48 0Z" fill="url(#tabg)" stroke="#8ab4d8"/><defs><linearGradient id="tabg" x1="0" y1="0" x2="0" y2="1"><stop offset="0" stop-color="#c8e4f8"/><stop offset="1" stop-color="#7ab8e4"/></linearGradient></defs></svg>
<div class="a" style="left:246px;top:709px;font-size:13px;line-height:16px;white-space:nowrap;color:#111">页 1</div>
<svg style="left:492px;top:711px" width="3" height="14"><path d="M1.5 1v2M1.5 6v2M1.5 11v2" stroke="#999" stroke-width="1.5"/></svg>
<div class="a" style="left:497px;top:709px;width:419px;height:18px;background:#ececec;border-left:1px solid #d0d0d0"></div>
<svg style="left:502px;top:713px" width="5" height="9"><path d="M5 0V9L0 4.5Z" fill="#333"/></svg>
<div class="a" style="left:625px;top:710px;width:278px;height:15px;border:1px solid #8a8a8a;border-radius:2px;background:linear-gradient(#f2f2f2,#dadada 55%,#c8c8c8)"></div>
<svg style="left:906px;top:713px" width="5" height="9"><path d="M0 0V9L5 4.5Z" fill="#333"/></svg>
<svg style="left:916px;top:710px" width="15" height="15" viewBox="0 0 15 15"><circle cx="6" cy="6" r="4.5" fill="#fff" stroke="#333" stroke-width="1.3"/><path d="M6 3.5V8.5M3.5 6H8.5" stroke="#333"/><path d="M9.5 9.5L14 14" stroke="#333" stroke-width="2"/></svg>
<div id="docpal" class="a"></div>
<div class="a" style="left:38px;top:727px;width:44px;height:21px;background:#f0f0f0"></div>
<svg style="left:41px;top:731px" width="3" height="14"><path d="M1.5 1v2M1.5 6v2M1.5 11v2" stroke="#aaa" stroke-width="1.5"/></svg>
<div class="a" style="left:48px;top:731px;width:14px;height:14px;border:1px solid #c0c0c0;border-radius:50%;background:radial-gradient(#fff,#e8e8e8)"></div>
<svg style="left:53px;top:735px" width="5" height="7"><path d="M0 0L5 3.5L0 7Z" fill="#111"/></svg>
<svg style="left:66px;top:729px" width="14" height="16" viewBox="0 0 14 16"><path d="M2 14L9 6" stroke="#2a3040" stroke-width="2.6"/><circle cx="11" cy="4" r="3" fill="#2a3040"/><path d="M1 15L3 13" stroke="#fff"/></svg>
<div class="a" style="left:81px;top:728px;width:18px;height:20px;background:#fff;border:1px solid #d0d0d0"></div><div class="a" style="left:83px;top:730px;width:14px;height:16px;background:#fff;border:1px solid #111"></div>
<svg style="left:84px;top:731px" width="12" height="14"><path d="M0 0L12 14M12 0L0 14" stroke="#111" stroke-width="0.9"/></svg>
<div class="a" style="left:99px;top:729px;width:17px;height:18px;background:#c84696;border:1px solid #8a3a70"></div>
<div class="a" style="left:116px;top:729px;width:17px;height:18px;background:#d272b2;border:1px solid #8a3a70;border-left:none"></div>
<div id="status" class="a"></div>
<div class="a" style="left:8px;top:748px;width:945px;height:1px;background:#fafafa"></div>
<div class="a" style="left:12px;top:753px;font-size:11.5px;white-space:nowrap;color:#222;letter-spacing:-0.1px">( 1.729 , 80.651 )</div>
<svg style="left:126px;top:754px" width="6" height="10"><path d="M0 0L6 5L0 10Z" fill="#111"/></svg>
<div class="a" style="left:326px;top:752px;font-size:12px;white-space:nowrap;color:#111">椭圆形 于 图层 1</div>
<svg style="left:619px;top:752px" width="14" height="13" viewBox="0 0 14 13"><rect x=".5" y=".5" width="13" height="10" fill="#d8e0ec" stroke="#7080a0"/><rect x="3.5" y="3" width="7" height="5" fill="#fff" stroke="#7080a0"/><path d="M2 12.5H12" stroke="#7080a0"/></svg>
<div class="a" style="left:838px;top:753px;width:58px;height:14px;background:linear-gradient(90deg,rgba(240,240,240,0),#c8c8c8 30%,#e0e0e0 60%,rgba(240,240,240,0))"></div>
<svg style="left:909px;top:754px" width="20" height="20" viewBox="0 0 20 20"><rect x=".5" y=".5" width="15" height="15" fill="#e8eef6" stroke="#a0b0c4"/><circle cx="8" cy="6" r="3.2" fill="#d84a1a"/><path d="M2 15 Q8 7 14 15Z" fill="#d84a1a"/><path d="M14 19L19 14V19Z" fill="#111"/></svg>
<div class="a" style="left:12px;top:772px;font-size:12px;white-space:nowrap;color:#111">文档颜色预置文件<span style="font-size:11px;letter-spacing:-0.2px">: RGB: sRGB IEC61966-2.1; CMYK: Japan Color 2001 Coated; </span>灰度<span style="font-size:11px;letter-spacing:-0.2px">: Dot Gain 15%</span></div>
<svg style="left:512px;top:774px" width="6" height="10"><path d="M0 0L6 5L0 10Z" fill="#111"/></svg>
<!-- page shadow -->
<div class="a" style="left:649px;top:147px;width:6px;height:562px;background:#c4c4c4"></div>
<!-- dialog -->
<div class="a" style="left:265px;top:155px;width:449px;height:381px;border:1px solid #44484e;border-radius:6px 6px 0 0;background:#f0f0f0;box-shadow:0 0 0 1px rgba(255,255,255,.5)"></div>
<div class="a" style="left:266px;top:156px;width:447px;height:25px;border-radius:5px 5px 0 0;background:linear-gradient(#c5d5e4,#d2dfeb 60%,#dbe5ee)"></div>
<div class="a" style="left:266px;top:181px;width:447px;height:5px;background:linear-gradient(#e4eaf0,#f0f0f0)"></div>
<div class="a" style="left:273px;top:161px;font-size:12px;color:#3a4656;white-space:nowrap">均匀填充</div>
<div class="a" style="left:678px;top:160px;width:31px;height:17px;border:1px solid #8796aa;border-radius:3px;background:linear-gradient(#dde7f1,#cddbe8 50%,#c2d2e2 51%,#d0dde9)"></div>
<svg style="left:687px;top:162px" width="14" height="12" viewBox="0 0 14 12"><path d="M2.5 2 L11.5 10 M11.5 2 L2.5 10" stroke="#3e4a5c" stroke-width="4.2"/><path d="M2.5 2 L11.5 10 M11.5 2 L2.5 10" stroke="#fff" stroke-width="2"/></svg>
<div class="a" style="left:276px;top:189px;width:58px;height:19px;border:1px solid #8c8f96;border-bottom:none;background:linear-gradient(#f6f6f6,#e6e6e6)"></div>
<div class="a" style="left:333px;top:189px;width:70px;height:19px;border:1px solid #8c8f96;border-bottom:none;background:linear-gradient(#f6f6f6,#e6e6e6)"></div>
<div class="a" style="left:274px;top:207px;width:429px;height:288px;border:1px solid #8c8f96;background:#fff"></div>
<div class="a" style="left:402px;top:186px;width:74px;height:22px;border:1px solid #8c8f96;border-bottom:none;background:#fff"></div>
<svg style="left:283px;top:191px" width="13" height="13" viewBox="0 0 13 13"><defs><linearGradient id="mg" x1="0" y1="1" x2="1" y2="0"><stop offset="0" stop-color="#202020"/><stop offset=".5" stop-color="#e8e0e4"/><stop offset="1" stop-color="#e02030"/></linearGradient></defs><rect width="13" height="13" fill="url(#mg)"/><rect x="7" y="0" width="6" height="13" fill="#d42a3c" opacity=".7"/></svg>
<div class="a" style="left:303px;top:192px;font-size:12px;white-space:nowrap">模型</div>
<svg style="left:340px;top:190px" width="16" height="16" viewBox="0 0 16 16"><circle cx="8" cy="8" r="5.8" fill="none" stroke="url(#wh)" stroke-width="3.5"/><defs><linearGradient id="wh" x1="0" y1="0" x2="1" y2="1"><stop offset="0" stop-color="#e04040"/><stop offset=".35" stop-color="#f0c020"/><stop offset=".6" stop-color="#30a060"/><stop offset="1" stop-color="#6040c0"/></linearGradient></defs></svg>
<div class="a" style="left:361px;top:192px;font-size:12px;white-space:nowrap">混和器</div>
<svg style="left:411px;top:188px" width="13" height="13" viewBox="0 0 13 13"><rect x="0" y="0" width="4" height="4" fill="#1d2a88"/><rect x="4.5" y="0" width="4" height="4" fill="#9a9a9a"/><rect x="9" y="0" width="4" height="4" fill="#303030"/><rect x="0" y="4.5" width="4" height="4" fill="#e0102a"/><rect x="4.5" y="4.5" width="4" height="4" fill="#00a0e0"/><rect x="9" y="4.5" width="4" height="4" fill="#404040"/><rect x="0" y="9" width="4" height="4" fill="#f08000"/><rect x="4.5" y="9" width="4" height="4" fill="#f0e000"/><rect x="9" y="9" width="4" height="4" fill="#30a040"/></svg>
<div class="a" style="left:431px;top:190px;font-size:12px;white-space:nowrap">调色板</div>
<div class="a" style="left:280px;top:225px;font-size:12px;white-space:nowrap">调色板(P):</div>
<div class="a" style="left:346px;top:222px;width:149px;height:21px;border:1px solid #8a8a8a;border-radius:3px;background:linear-gradient(#f8f8f8,#e8e8e8 50%,#dcdcdc)"></div>
<div class="a" style="left:349px;top:225px;font-size:12px;white-space:nowrap">默认 <span style="font-size:11px;letter-spacing:-0.3px">CMYK</span> 调色板</div>
<svg style="left:481px;top:230px" width="9" height="5"><path d="M0 0H9L4.5 5Z" fill="#111"/></svg>
<div class="a" style="left:503px;top:223px;width:19px;height:20px;border:1px solid #9a9a9a;border-radius:3px;background:linear-gradient(#fafafa,#e4e4e4)"></div>
<svg style="left:505px;top:227px" width="15" height="12" viewBox="0 0 15 12"><path d="M.5 1 H5 L6.5 2.5 H12 V11.5 H.5Z" fill="#2a3450"/><path d="M2.5 5 H14.5 L12.5 11.5 H.5Z" fill="#c4ccd8" stroke="#2a3450"/></svg>
<div class="a" style="left:533px;top:223px;width:21px;height:22px;border:1px solid #3a78b0;border-radius:3px;background:linear-gradient(#d4ecfb,#8cc6ee)"></div>
<svg style="left:536px;top:226px" width="15" height="16" viewBox="0 0 15 16"><path d="M2 14 L10 6" stroke="#1a2840" stroke-width="2.8"/><path d="M1 15 L3 13" stroke="#4a90c8" stroke-width="1.5"/><circle cx="11.5" cy="4" r="3" fill="#1a2840"/></svg>
<div class="a" style="left:560px;top:222px;width:134px;height:34px;background:#221a17"></div>
<div class="a" style="left:560px;top:256px;width:134px;height:33px;background:#b04383"></div>
<div class="a" style="left:284px;top:251px;width:209px;height:201px;background:#474747"></div>
<div class="a" style="left:285px;top:252px;width:25px;height:24px;background:#211a17"></div>
<div class="a" style="left:311px;top:252px;width:25px;height:24px;background:#403a3a"></div>
<div class="a" style="left:337px;top:252px;width:25px;height:24px;background:#575656"></div>
<div class="a" style="left:363px;top:252px;width:25px;height:24px;background:#6d6d6d"></div>
<div class="a" style="left:389px;top:252px;width:25px;height:24px;background:#878787"></div>
<div class="a" style="left:415px;top:252px;width:25px;height:24px;background:#9c9c9c"></div>
<div class="a" style="left:441px;top:252px;width:25px;height:24px;background:#b1b1b1"></div>
<div class="a" style="left:467px;top:252px;width:25px;height:24px;background:#c6c6c6"></div>
<div class="a" style="left:285px;top:277px;width:25px;height:24px;background:#dadada"></div>
<div class="a" style="left:311px;top:277px;width:25px;height:24px;background:#ececec"></div>
<div class="a" style="left:337px;top:277px;width:25px;height:24px;background:#ffffff"></div>
<div class="a" style="left:363px;top:277px;width:25px;height:24px;background:#1d2088"></div>
<div class="a" style="left:389px;top:277px;width:25px;height:24px;background:#00a0e9"></div>
<div class="a" style="left:415px;top:277px;width:25px;height:24px;background:#009944"></div>
<div class="a" style="left:441px;top:277px;width:25px;height:24px;background:#fff100"></div>
<div class="a" style="left:467px;top:277px;width:25px;height:24px;background:#e60012"></div>
<div class="a" style="left:285px;top:302px;width:25px;height:24px;background:#e4007f"></div>
<div class="a" style="left:311px;top:302px;width:25px;height:24px;background:#b04b87"></div>
<div class="a" style="left:337px;top:302px;width:25px;height:24px;background:#f08300"></div>
<div class="a" style="left:363px;top:302px;width:25px;height:24px;background:#f5b2b2"></div>
<div class="a" style="left:389px;top:302px;width:25px;height:24px;background:#8a7370"></div>
<div class="a" style="left:415px;top:302px;width:25px;height:24px;background:#d2cde6"></div>
<div class="a" style="left:441px;top:302px;width:25px;height:24px;background:#a59aca"></div>
<div class="a" style="left:467px;top:302px;width:25px;height:24px;background:#7088c6"></div>
<div class="a" style="left:285px;top:327px;width:25px;height:24px;background:#7366ad"></div>
<div class="a" style="left:311px;top:327px;width:25px;height:24px;background:#8f82bc"></div>
<div class="a" style="left:337px;top:327px;width:25px;height:24px;background:#4b5e97"></div>
<div class="a" style="left:363px;top:327px;width:25px;height:24px;background:#5a5077"></div>
<div class="a" style="left:389px;top:327px;width:25px;height:24px;background:#6c84a6"></div>
<div class="a" style="left:415px;top:327px;width:25px;height:24px;background:#0b8bdb"></div>
<div class="a" style="left:441px;top:327px;width:25px;height:24px;background:#9ed3f5"></div>
<div class="a" style="left:467px;top:327px;width:25px;height:24px;background:#b9c8d2"></div>
<div class="a" style="left:285px;top:352px;width:25px;height:24px;background:#94a5ad"></div>
<div class="a" style="left:311px;top:352px;width:25px;height:24px;background:#6c7b84"></div>
<div class="a" style="left:337px;top:352px;width:25px;height:24px;background:#47535a"></div>
<div class="a" style="left:363px;top:352px;width:25px;height:24px;background:#4f7671"></div>
<div class="a" style="left:389px;top:352px;width:25px;height:24px;background:#3d8b7d"></div>
<div class="a" style="left:415px;top:352px;width:25px;height:24px;background:#6e9c98"></div>
<div class="a" style="left:441px;top:352px;width:25px;height:24px;background:#4ba695"></div>
<div class="a" style="left:467px;top:352px;width:25px;height:24px;background:#4a9c6e"></div>
<div class="a" style="left:285px;top:377px;width:25px;height:24px;background:#56b9cb"></div>
<div class="a" style="left:311px;top:377px;width:25px;height:24px;background:#44a2b5"></div>
<div class="a" style="left:337px;top:377px;width:25px;height:24px;background:#b5c8b9"></div>
<div class="a" style="left:363px;top:377px;width:25px;height:24px;background:#d7ead8"></div>
<div class="a" style="left:389px;top:377px;width:25px;height:24px;background:#a2d4a7"></div>
<div class="a" style="left:415px;top:377px;width:25px;height:24px;background:#9aa99a"></div>
<div class="a" style="left:441px;top:377px;width:25px;height:24px;background:#98a07a"></div>
<div class="a" style="left:467px;top:377px;width:25px;height:24px;background:#bac76e"></div>
<div class="a" style="left:285px;top:402px;width:25px;height:24px;background:#b9c194"></div>
<div class="a" style="left:311px;top:402px;width:25px;height:24px;background:#a8c80f"></div>
<div class="a" style="left:337px;top:402px;width:25px;height:24px;background:#d9e26b"></div>
<div class="a" style="left:363px;top:402px;width:25px;height:24px;background:#585045"></div>
<div class="a" style="left:389px;top:402px;width:25px;height:24px;background:#858272"></div>
<div class="a" style="left:415px;top:402px;width:25px;height:24px;background:#b4ae97"></div>
<div class="a" style="left:441px;top:402px;width:25px;height:24px;background:#b7ab7b"></div>
<div class="a" style="left:467px;top:402px;width:25px;height:24px;background:#dcd168"></div>
<div class="a" style="left:285px;top:427px;width:25px;height:24px;background:#fff07b"></div>
<div class="a" style="left:311px;top:427px;width:25px;height:24px;background:#fff7a9"></div>
<div class="a" style="left:337px;top:427px;width:25px;height:24px;background:#fffcdb"></div>
<div class="a" style="left:363px;top:427px;width:25px;height:24px;background:#a98f6d"></div>
<div class="a" style="left:389px;top:427px;width:25px;height:24px;background:#db955b"></div>
<div class="a" style="left:415px;top:427px;width:25px;height:24px;background:#e0b35f"></div>
<div class="a" style="left:441px;top:427px;width:25px;height:24px;background:#ee8235"></div>
<div class="a" style="left:467px;top:427px;width:25px;height:24px;background:#f2a93c"></div>
<div class="a" style="left:311px;top:302px;width:25px;height:24px;background:#fff"></div>
<div class="a" style="left:313px;top:304px;width:21px;height:20px;border:2px solid #000;background:#b04b87"></div>
<div class="a" style="left:504px;top:253px;width:16px;height:15px;border:1px solid #8a8a8a;border-radius:3px;background:linear-gradient(#fafafa,#dedede)"></div>
<svg style="left:508px;top:258px" width="8" height="5"><path d="M0 5H8L4 0Z" fill="#111"/></svg>
<div class="a" style="left:503px;top:271px;width:18px;height:166px;background:linear-gradient(#505050 0.00%,#d0d0d0 8.43%,#fff 8.43%,#fff 10.84%,#1fa0c8 10.84%,#1fa0c8 12.65%,#20a040 12.65%,#20a040 13.86%,#fff000 13.86%,#fff000 15.06%,#e0206a 15.06%,#e0206a 16.87%,#d02848 16.87%,#d02848 18.07%,#f0a090 18.07%,#f0a090 19.88%,#b8b0d8 19.88%,#b8b0d8 22.29%,#7a70b0 22.29%,#7a70b0 25.90%,#5a6a9a 25.90%,#5a6a9a 28.31%,#3a5a80 28.31%,#3a5a80 30.72%,#90c8e8 30.72%,#90c8e8 33.13%,#607878 33.13%,#607878 35.54%,#4a9a90 35.54%,#4a9a90 40.36%,#60b0a0 40.36%,#60b0a0 43.37%,#c8e0d8 43.37%,#c8e0d8 45.18%,#a0a888 45.18%,#a0a888 48.80%,#b0c830 48.80%,#b0c830 51.20%,#606040 51.20%,#606040 53.61%,#b0a870 53.61%,#b0a870 56.63%,#f0e070 56.63%,#f0e070 59.64%,#fff8b0 59.64%,#fff8b0 62.05%,#e0a070 62.05%,#e0a070 64.46%,#f0a030 64.46%,#f0a030 68.07%,#e09040 68.07%,#e09040 70.48%,#c05040 70.48%,#c05040 73.49%,#f08070 73.49%,#f08070 75.90%,#f8c0b0 75.90%,#f8c0b0 77.71%,#e06070 77.71%,#e06070 81.33%,#e83050 81.33%,#e83050 83.73%,#c04060 83.73%,#c04060 86.14%,#b06080 86.14%,#b06080 88.55%,#d0a0c0 88.55%,#d0a0c0 90.96%,#d04090 90.96%,#d04090 94.58%,#c070b0 94.58%,#c070b0 96.99%,#803090 96.99%,#803090 100.00%)"></div>
<div class="a" style="left:500px;top:267px;width:24px;height:6px;border:1px solid #222;border-radius:1px"></div>
<div class="a" style="left:504px;top:439px;width:16px;height:16px;border:1px solid #8a8a8a;border-radius:3px;background:linear-gradient(#fafafa,#dedede)"></div>
<svg style="left:508px;top:445px" width="8" height="5"><path d="M0 0H8L4 5Z" fill="#111"/></svg>
<div class="a" style="left:533px;top:305px;width:66px;height:17px;border:1px solid #8a8a8a;border-radius:3px;background:linear-gradient(#f8f8f8,#e8e8e8 50%,#dcdcdc)"></div>
<div class="a" style="left:538px;top:306px;font-size:11px;white-space:nowrap">CMYK</div>
<svg style="left:584px;top:312px" width="7" height="4"><path d="M0 0H7L3.5 4Z" fill="#111"/></svg>
<div class="a" style="left:627px;top:305px;width:67px;height:17px;border:1px solid #8a8a8a;border-radius:3px;background:linear-gradient(#f8f8f8,#e8e8e8 50%,#dcdcdc)"></div>
<div class="a" style="left:632px;top:306px;font-size:12px;white-space:nowrap;letter-spacing:-0.3px">十六进制</div>
<svg style="left:683px;top:312px" width="6" height="4"><path d="M0 0H6L3 4Z" fill="#111"/></svg>
<div class="a" style="left:534px;top:331px;font-size:11px;white-space:nowrap">C</div>
<div class="a" style="left:556px;top:331px;font-size:11px;white-space:nowrap">20</div>
<div class="a" style="left:534px;top:349px;font-size:11px;white-space:nowrap">M</div>
<div class="a" style="left:556px;top:349px;font-size:11px;white-space:nowrap">80</div>
<div class="a" style="left:534px;top:368px;font-size:11px;white-space:nowrap">Y</div>
<div class="a" style="left:556px;top:368px;font-size:11px;white-space:nowrap">0</div>
<div class="a" style="left:534px;top:388px;font-size:11px;white-space:nowrap">K</div>
<div class="a" style="left:556px;top:388px;font-size:11px;white-space:nowrap">20</div>
<div class="a" style="left:628px;top:330px;font-size:11px;white-space:nowrap;color:#222">#B04B87</div>
<div class="a" style="left:539px;top:446px;font-size:12px;white-space:nowrap">名称(N):</div>
<div class="a" style="left:539px;top:463px;width:155px;height:21px;border:1px solid #c8c8c8;background:#fff"></div>
<div class="a" style="left:542px;top:466px;font-size:12px;white-space:nowrap">紫</div>
<svg style="left:680px;top:471px" width="9" height="5"><path d="M0 0H9L4.5 5Z" fill="#111"/></svg>
<div class="a" style="left:280px;top:466px;font-size:12px;white-space:nowrap">淡色(T):</div>
<div class="a" style="left:335px;top:465px;width:153px;height:15px;background:linear-gradient(#fafafa,#ececec)"></div>
<div class="a" style="left:339px;top:471px;width:144px;height:3px;border-top:2px solid #8a8a8a;border-bottom:1px solid #fff"></div>
<div class="a" style="left:480px;top:466px;width:5px;height:13px;border:1px solid #666;background:#f4f4f4"></div>
<div class="a" style="left:490px;top:463px;width:33px;height:21px;border:1px solid #c8c8c8;background:#fff;font-size:11px;color:#999;text-align:center;line-height:19px">100</div>
<div class="a" style="left:275px;top:505px;width:91px;height:20px;border:1px solid #707070;border-radius:3px;background:linear-gradient(#f6f6f6,#ebebeb 45%,#dddddd 55%,#d2d2d2);font-size:12px;text-align:center;line-height:18px;white-space:nowrap">加到调色板(A)</div>
<div class="a" style="left:369px;top:505px;width:13px;height:20px;border:1px solid #707070;border-radius:3px;background:linear-gradient(#f6f6f6,#ebebeb 45%,#dddddd 55%,#d2d2d2);font-size:12px;text-align:center;line-height:18px;white-space:nowrap"></div>
<svg style="left:371px;top:513px" width="9" height="5"><path d="M0 0H9L4.5 5Z" fill="#111"/></svg>
<div class="a" style="left:389px;top:505px;width:73px;height:20px;border:1px solid #707070;border-radius:3px;background:linear-gradient(#f6f6f6,#ebebeb 45%,#dddddd 55%,#d2d2d2);font-size:12px;text-align:center;line-height:18px;white-space:nowrap;text-align:left;padding-left:9px">选项(P)</div>
<svg style="left:442px;top:513px" width="8" height="4"><path d="M0 0H8L4 4Z" fill="#111"/></svg>
<div class="a" style="left:469px;top:505px;width:72px;height:20px;border:1px solid #707070;border-radius:3px;background:linear-gradient(#f6f6f6,#ebebeb 45%,#dddddd 55%,#d2d2d2);font-size:12px;text-align:center;line-height:18px;white-space:nowrap">确定</div>
<div class="a" style="left:550px;top:505px;width:73px;height:20px;border:1px solid #707070;border-radius:3px;background:linear-gradient(#f6f6f6,#ebebeb 45%,#dddddd 55%,#d2d2d2);font-size:12px;text-align:center;line-height:18px;white-space:nowrap">取消</div>
<div class="a" style="left:631px;top:505px;width:73px;height:20px;border:1px solid #707070;border-radius:3px;background:linear-gradient(#f6f6f6,#ebebeb 45%,#dddddd 55%,#d2d2d2);font-size:12px;text-align:center;line-height:18px;white-space:nowrap">帮助</div>
</body></html>
